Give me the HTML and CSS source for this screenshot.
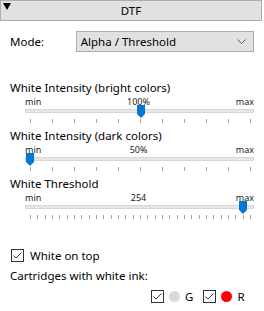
FILE: index.html
```html
<!DOCTYPE html>
<html lang="en">
<head>
  <link rel="stylesheet" href="styles.css">
</head>
<body>
  <div class="panel">
    <div class="header">
      <svg class="arrow" width="8" height="8" viewBox="0 0 8 8"><polygon points="0,0 8,0 4,7" fill="#000"/></svg>
      <span class="title">DTF</span>
      <span class="arrow-space"></span>
    </div>

    <div class="content">
      <div class="mode-row">
        <span class="mode-label">Mode:</span>
        <div class="select">
          <span>Alpha / Threshold</span>
          <svg class="chevron" width="9" height="5" viewBox="0 0 9 5"><polyline points="0.5,0.5 4.5,4.5 8.5,0.5" fill="none" stroke="#555" stroke-width="1"/></svg>
        </div>
      </div>

      <div class="slider">
        <div class="slider-label">White Intensity (bright colors)</div>
        <div class="scale">
          <span>min</span><span>100%</span><span>max</span>
        </div>
        <div class="track">
          <svg class="thumb" style="left: 111px" width="8" height="13" viewBox="0 0 8 13"><polygon points="0,0 8,0 8,9 4,13 0,9" fill="#0078d7"/></svg>
        </div>
        <div class="ticks">
          <i></i><i></i><i></i><i></i><i></i><i></i><i></i><i></i><i></i><i></i><i></i>
        </div>
      </div>

      <div class="slider">
        <div class="slider-label">White Intensity (dark colors)</div>
        <div class="scale">
          <span>min</span><span>50%</span><span>max</span>
        </div>
        <div class="track">
          <svg class="thumb" style="left: 0px" width="8" height="13" viewBox="0 0 8 13"><polygon points="0,0 8,0 8,9 4,13 0,9" fill="#0078d7"/></svg>
        </div>
        <div class="ticks">
          <i></i><i></i><i></i><i></i><i></i><i></i><i></i><i></i><i></i><i></i><i></i>
        </div>
      </div>

      <div class="slider">
        <div class="slider-label">White Threshold</div>
        <div class="scale">
          <span>min</span><span>254</span><span>max</span>
        </div>
        <div class="track">
          <svg class="thumb" style="left: 213px" width="8" height="13" viewBox="0 0 8 13"><polygon points="0,0 8,0 8,9 4,13 0,9" fill="#0078d7"/></svg>
        </div>
        <div class="ticks">
          <i></i><i></i><i></i><i></i><i></i><i></i><i></i><i></i><i></i><i></i>
          <i></i><i></i><i></i><i></i><i></i><i></i><i></i><i></i><i></i><i></i>
          <i></i><i></i><i></i><i></i><i></i><i></i><i></i><i></i><i></i><i></i>
          <i></i>
        </div>
      </div>

      <label class="check-row">
        <svg class="box" width="13" height="13" viewBox="0 0 13 13"><rect x="0.5" y="0.5" width="12" height="12" fill="#fff" stroke="#333"/><polyline points="2.5,6.5 5,9 10.5,3.5" fill="none" stroke="#333" stroke-width="1"/></svg>
        <span>White on top</span>
      </label>

      <div class="cart-label">Cartridges with white ink:</div>

      <div class="cartridges">
        <div class="cart">
          <svg class="box" width="13" height="13" viewBox="0 0 13 13"><rect x="0.5" y="0.5" width="12" height="12" fill="#fff" stroke="#333"/><polyline points="2.5,6.5 5,9 10.5,3.5" fill="none" stroke="#333" stroke-width="1"/></svg>
          <span class="dot gray"></span>
          <span>G</span>
        </div>
        <div class="cart">
          <svg class="box" width="13" height="13" viewBox="0 0 13 13"><rect x="0.5" y="0.5" width="12" height="12" fill="#fff" stroke="#333"/><polyline points="2.5,6.5 5,9 10.5,3.5" fill="none" stroke="#333" stroke-width="1"/></svg>
          <span class="dot red"></span>
          <span>R</span>
        </div>
      </div>
    </div>
  </div>
</body>
</html>
```

FILE: styles.css
```css
*{
    box-sizing: border-box;
}
body{
    margin: 0;
    background: #fff;
    font-family: "Noto Sans", "Open Sans", sans-serif;
    font-size: 11.5px;
    color: #000;
}
.panel{
    width: 264px;
}
.header{
    width: 262px;
    height: 21px;
    background: #e1e1e1;
    border: 1px solid #adadad;
    display: flex;
    align-items: flex-start;
}
.arrow{
    margin: 2px 3px 0 2px;
}
.arrow-space{
    width: 13px;
}
.title{
    flex: 1;
    text-align: center;
    line-height: 19px;
}
.content{
    padding: 10px 10px 0 10px;
}
.mode-row{
    display: flex;
    align-items: center;
    height: 21px;
}
.mode-label{
    width: 66px;
}
.select{
    width: 179px;
    height: 21px;
    background: #e1e1e1;
    border: 1px solid #adadad;
    display: flex;
    align-items: center;
    justify-content: space-between;
    padding: 0 7px 0 4px;
}
.mode-row + .slider{
    margin-top: 28px;
}
.slider-label{
    line-height: 16px;
    height: 16px;
}
.scale{
    display: flex;
    justify-content: space-between;
    margin-left: 15px;
    width: 229px;
    font-size: 9px;
    line-height: 11px;
    height: 11px;
    color: #222;
}
.track{
    position: relative;
    margin: 2px 0 0 15px;
    width: 229px;
    height: 4px;
    background: #e7e7e7;
    border: 1px solid #d6d6d6;
}
.thumb{
    position: absolute;
    top: -5px;
}
.ticks{
    display: flex;
    justify-content: space-between;
    margin: 6px 0 0 20px;
    width: 221px;
    height: 9px;
}
.ticks i{
    width: 1px;
    height: 4px;
    background: #a0a0a0;
}
.check-row{
    display: flex;
    align-items: center;
    gap: 6px;
    margin-top: 23px;
    margin-left: 1px;
    height: 16px;
}
.cart-label{
    margin-top: 5px;
    line-height: 16px;
}
.cartridges{
    display: flex;
    gap: 10px;
    margin-left: 141px;
    margin-top: 5px;
}
.cart{
    display: flex;
    align-items: center;
    gap: 5px;
}
.dot{
    width: 11px;
    height: 11px;
    border-radius: 50%;
}
.dot.gray{
    background: #dadada;
}
.dot.red{
    background: #ff0000;
}
```
